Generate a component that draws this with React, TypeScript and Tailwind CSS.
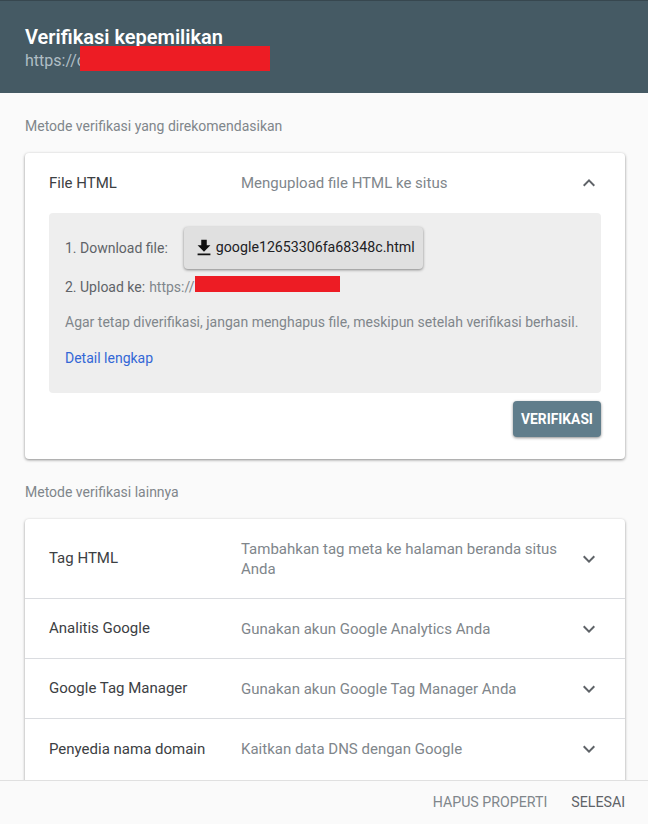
import React from "react";

const Chevron = ({ up = false }: { up?: boolean }) => (
  <svg width="24" height="24" viewBox="0 0 24 24" fill="#5f6368" className="shrink-0">
    <path d={up ? "M7.41 15.41 12 10.83l4.59 4.58L18 14l-6-6-6 6z" : "M7.41 8.59 12 13.17l4.59-4.58L18 10l-6 6-6-6z"} />
  </svg>
);

const Row = ({ name, desc, tall = false, last = false }: { name: string; desc: string; tall?: boolean; last?: boolean }) => (
  <div className={`flex items-center px-6 ${tall ? "h-20" : "h-[60px]"} ${last ? "" : "border-b border-[#dadce0]"}`}>
    <div className="w-[192px] shrink-0 text-[15px] text-[#3c4043]">{name}</div>
    <div className="flex-1 text-[15px] leading-5 text-[#80868b] pr-4">{desc}</div>
    <Chevron />
  </div>
);

export default function App() {
  return (
    <div className="w-[648px] h-[824px] flex flex-col overflow-hidden bg-[#fafafa]" style={{ fontFamily: "Roboto, sans-serif" }}>
      <header className="h-[93px] shrink-0 bg-[#455a64] border-t border-[#37474f] px-[25px] pt-[24px] relative">
        <div className="text-[20px] leading-6 font-semibold text-white">Verifikasi kepemilikan</div>
        <div className="text-[16px] leading-[24px] text-[#b0bec5]">https://c</div>
        <div className="absolute left-[80px] top-[45px] w-[190px] h-[25px] bg-[#ed1c24]" />
      </header>

      <main className="flex-1 min-h-0 overflow-hidden pl-[25px] pr-[23px]">
        <div className="pt-6 h-[60px] text-[14px] leading-[18px] text-[#80868b]">Metode verifikasi yang direkomendasikan</div>
        <section className="bg-white rounded-sm shadow-[0_1px_3px_rgba(0,0,0,0.45)] h-[306px] px-6">
          <div className="flex items-center h-[60px]">
            <div className="w-[192px] shrink-0 text-[15px] text-[#3c4043]">File HTML</div>
            <div className="flex-1 text-[15px] text-[#80868b]">Mengupload file HTML ke situs</div>
            <Chevron up />
          </div>
          <div className="bg-[#eeeeee] rounded-sm h-[180px] px-4 text-[14px] text-[#5f6368]">
            <div className="flex items-center pt-[14px]">
              <span>1. Download file:</span>
              <div className="ml-4 h-[42px] w-[239px] flex items-center pl-[9px] rounded bg-[#e0e0e0] shadow-[0_1px_3px_rgba(0,0,0,0.45)] text-[14.2px] text-[#202124]">
                <svg width="22" height="22" viewBox="0 0 24 24" fill="#111" className="shrink-0 mr-[1px]">
                  <path d="M19 9h-4V3H9v6H5l7 7 7-7zM5 18v2h14v-2H5z" />
                </svg>
                <span>google12653306fa68348c.html</span>
              </div>
            </div>
            <div className="relative mt-[6px] h-[24px] leading-6 flex">
              <span>2. Upload ke:</span>
              <span className="ml-1 text-[#80868b]">https://</span>
              <div className="absolute left-[130px] top-[1px] w-[145px] h-4 bg-[#ed1c24]" />
            </div>
            <div className="mt-[13px] text-[14px] leading-5 text-[#80868b]">Agar tetap diverifikasi, jangan menghapus file, meskipun setelah verifikasi berhasil.</div>
            <div className="mt-[16px] text-[14px] leading-5 text-[#3367d6]">Detail lengkap</div>
          </div>
          <div className="flex justify-end mt-[8px]">
            <button className="w-[88px] h-9 rounded bg-[#607d8b] text-white text-[13.8px] font-bold shadow-[0_1px_3px_rgba(0,0,0,0.45)]">VERIFIKASI</button>
          </div>
        </section>

        <div className="pt-6 h-[60px] text-[14px] leading-[18px] text-[#80868b]">Metode verifikasi lainnya</div>
        <section className="bg-white rounded-sm shadow-[0_1px_3px_rgba(0,0,0,0.4)] pb-6">
          <Row tall name="Tag HTML" desc="Tambahkan tag meta ke halaman beranda situs Anda" />
          <Row name="Analitis Google" desc="Gunakan akun Google Analytics Anda" />
          <Row name="Google Tag Manager" desc="Gunakan akun Google Tag Manager Anda" />
          <Row last name="Penyedia nama domain" desc="Kaitkan data DNS dengan Google" />
        </section>
      </main>

      <footer className="h-[44px] shrink-0 bg-[#fafafa] border-t border-[#e0e0e0] flex items-center justify-end gap-6 pr-[23px] text-[14.2px]">
        <span className="text-[#80868b]">HAPUS PROPERTI</span>
        <span className="text-[#5f6368]">SELESAI</span>
      </footer>
    </div>
  );
}
